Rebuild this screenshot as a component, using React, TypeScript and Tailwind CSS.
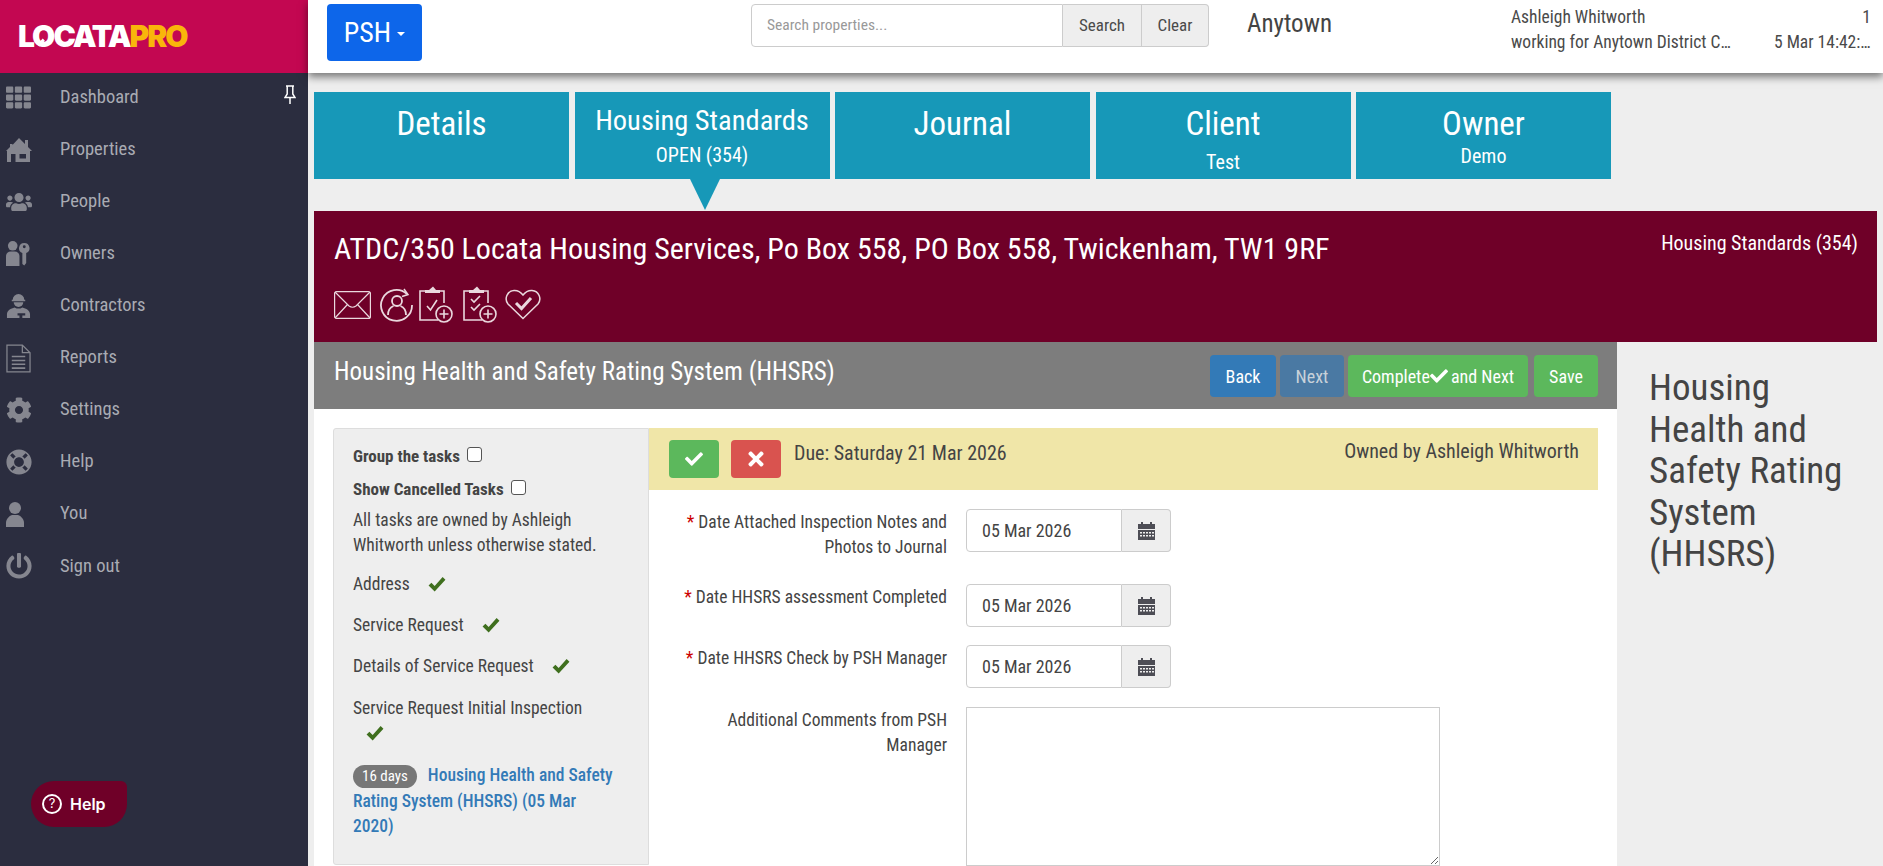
import { ReactNode } from "react";
import { FaCheck, FaCog, FaLifeRing, FaPowerOff, FaTh, FaTimes, FaUsers } from "react-icons/fa";

function HomeIcon() {
  return (
    <svg viewBox="0 0 26 26" className="w-[26px] h-[26px]" fill="currentColor">
      <path
        fillRule="evenodd"
        d="M13 1l6 6V3h3v7l4 4h-2v11H1V14H0l4-4V7h2.500v1zM13.500 17v4.500H20V17zM5 17v8h4.500v-8z"
      />
    </svg>
  );
}

function PersonIcon() {
  return (
    <svg viewBox="0 0 18 25" className="w-[18px] h-[25px]" fill="currentColor">
      <circle cx="9" cy="6" r="6" />
      <path d="M0 25v-4c0-4 3-7 6-8h6c3 1 6 4 6 8v4z" />
    </svg>
  );
}

function OwnerIcon() {
  return (
    <svg viewBox="0 0 26 26" className="w-[25px] h-[25px]" fill="currentColor">
      <circle cx="7" cy="5" r="5" />
      <path d="M0 26V16c0-3 2-5 5-5h4c3 0 5 2 5 5v10z" />
      <path fillRule="evenodd" d="M19 2a5.5 5.5 0 0 1 2 10.6V23l-2 2.5-2-1.500v-11.400A5.500 5.500 0 0 1 19 2zm0 2.500a1.500 1.500 0 1 0 0 3 1.500 1.500 0 0 0 0-3z" />
    </svg>
  );
}

function ContractorIcon() {
  return (
    <svg viewBox="0 0 26 26" className="w-[25px] h-[25px]" fill="currentColor">
      <path d="M7 7a6 6 0 0 1 12 0h1v1.500H6V7z" />
      <path d="M8 9.500h10a5 5 0 0 1-10 0z" />
      <path d="M1 26v-4c0-4 4-6 8-7l2 1h4l2-1c4 1 8 3 8 7v4H17v-2.500h3V21h-8v2.500h2V26z" />
    </svg>
  );
}

function ReportIcon() {
  return (
    <svg viewBox="0 0 26 30" className="w-[25px] h-[29px]" fill="none" stroke="currentColor" strokeWidth="1.300">
      <path d="M1 1h16l8 8v20H1z" />
      <path d="M17 1v8h8" />
      <path d="M6 13h14M6 17h14M6 21h14M6 25h14" strokeWidth="1.600" />
    </svg>
  );
}

function PinIcon() {
  return (
    <svg viewBox="0 0 12 20" className="w-[12px] h-[20px]" fill="none" stroke="white" strokeWidth="1.500">
      <path d="M2 1h8M3.200 1v8L1 12.500h10L8.800 9V1M6 12.500V19" />
    </svg>
  );
}

function CalendarIcon() {
  return (
    <svg viewBox="0 0 17 18" className="w-[17px] h-[18px]" fill="#4d4d55">
      <path d="M3 0h2v2h7V0h2v2h3v5H0V2h3z" />
      <path
        fillRule="evenodd"
        d="M0 8h17v10H0zm2 2v1.500h2V10zm3 0v1.500h2V10zm3 0v1.500h2V10zm3 0v1.500h2V10zm3 0v1.500h2V10zM2 13v1.500h2V13zm3 0v1.500h2V13zm3 0v1.500h2V13zm3 0v1.500h2V13zm3 0v1.500h2V13z"
      />
    </svg>
  );
}

function GreenTick() {
  return (
    <svg viewBox="0 0 18 16" className="w-[18px] h-[15px]" fill="#3f6f1e">
      <path d="M0 9l3-3 3.500 3.500L15 0l3 3L6.500 15.500z" />
    </svg>
  );
}

function ActionIcons() {
  return (
    <div className="flex items-center mt-[19px] text-[#ead8de]">
      <svg viewBox="0 0 37 28" className="w-[37px] h-[28px]" fill="none" stroke="currentColor" strokeWidth="1.200">
        <rect x="0.600" y="0.600" width="35.800" height="26.800" rx="2" />
        <path d="M1 1l14 14q3.500 2.500 7 0L36 1M1 27l12.500-13.500M36 27L23.500 13.500" />
      </svg>
      <svg viewBox="0 0 34 34" className="w-[34px] h-[34px] ml-[9px]" fill="none" stroke="currentColor" strokeWidth="1.800">
        <path d="M27 6a15.500 15.500 0 1 0 5 11" />
        <path d="M24 1l4 5.500-6 2" strokeWidth="1.500" />
        <circle cx="17" cy="13" r="5" />
        <path d="M8 27c0-5 3-8 5.500-9M26 27c0-5-3-8-5.500-9" />
      </svg>
      <svg viewBox="0 0 34 37" className="w-[34px] h-[37px] ml-[5px]" fill="none" stroke="currentColor" strokeWidth="1.600">
        <path d="M8 5H1v29h18M19 5h6v12" />
        <path d="M6 7h15V4h-4l-3-3.500L10 4H6z" fill="currentColor" stroke="none" />
        <path d="M8 20l3.500 4L18 14" />
        <circle cx="25" cy="28" r="8" />
        <path d="M20.500 28h9M25 23.500v9" />
      </svg>
      <svg viewBox="0 0 34 37" className="w-[34px] h-[37px] ml-[10px]" fill="none" stroke="currentColor" strokeWidth="1.600">
        <path d="M8 5H1v29h18M19 5h6v12" />
        <path d="M6 7h15V4h-4l-3-3.500L10 4H6z" fill="currentColor" stroke="none" />
        <path d="M8 13l3 3 6-6M8 21l3 3 6-6" />
        <circle cx="25" cy="28" r="8" />
        <path d="M20.500 28h9M25 23.500v9" />
      </svg>
      <svg viewBox="0 0 36 31" className="w-[36px] h-[31px] ml-[8px]" fill="none" stroke="currentColor" strokeWidth="1.500">
        <path d="M18 29.500L3 15C-1 10 2 2 9 1.500c4-.3 7 2 9 4.500 2-2.500 5-4.800 9-4.500 7 .5 10 8.500 6 13.500z" />
        <path d="M11 14l5.500 5.500L26 9" strokeWidth="3" />
      </svg>
    </div>
  );
}

const menu: { label: string; icon: ReactNode }[] = [
  { label: "Dashboard", icon: <FaTh size={25} /> },
  { label: "Properties", icon: <HomeIcon /> },
  { label: "People", icon: <FaUsers size={26} /> },
  { label: "Owners", icon: <OwnerIcon /> },
  { label: "Contractors", icon: <ContractorIcon /> },
  { label: "Reports", icon: <ReportIcon /> },
  { label: "Settings", icon: <FaCog size={26} /> },
  { label: "Help", icon: <FaLifeRing size={26} /> },
  { label: "You", icon: <PersonIcon /> },
  { label: "Sign out", icon: <FaPowerOff size={26} /> },
];

function Sidebar() {
  return (
    <aside className="w-[308px] shrink-0 bg-[#2b2d3f] relative">
      <div className="h-[73px] bg-[#c30751] flex items-center pl-[18px]">
        <span className="relative [font-family:Inter,sans-serif] [font-stretch:normal] font-black text-[30px] tracking-[-2px] text-white">
          LOCATA<span className="text-[#f9b50b]">PRO</span>
          <span className="absolute left-[19px] top-[27px] w-[8px] h-[3px] bg-white -rotate-45" />
        </span>
      </div>
      <div className="absolute left-[284px] top-[85px]">
        <PinIcon />
      </div>
      <nav className="-mt-[1.500px]">
        {menu.map((item) => (
          <div key={item.label} className="flex items-center h-[52.100px] text-[18.500px] text-[#a9abb3]">
            <div className="w-[60px] pl-[6px] text-[#85868f]">{item.icon}</div>
            <span>{item.label}</span>
          </div>
        ))}
      </nav>
      <div className="absolute left-[31px] top-[781px] w-[96px] h-[46px] bg-[#6f0028] rounded-[23px] rounded-tr-[6px] flex items-center pl-[11px] text-white [font-family:Inter,sans-serif] [font-stretch:normal] font-semibold text-[16px]">
        <span className="w-[20px] h-[20px] rounded-full border-2 border-white text-[13px] flex items-center justify-center mr-[8px] font-normal">
          ?
        </span>
        Help
      </div>
    </aside>
  );
}

function TopBar() {
  return (
    <header className="h-[73px] shrink-0 bg-white shadow-[0_4px_8px_rgba(0,0,0,0.5)] relative flex text-[#4a4a4a]">
      <button className="ml-[19px] mt-[4px] w-[95px] h-[57px] bg-[#0d66ea] rounded-[4px] text-white text-[28px] flex items-center justify-center">
        PSH
        <span className="ml-[6px] mt-[2px] border-x-[4px] border-x-transparent border-t-[4px] border-t-white" />
      </button>
      <div className="ml-[329px] mt-[4px] h-[43px] flex text-[17px]">
        <div className="w-[312px] border border-[#ccc] rounded-l-[4px] flex items-center pl-[15px] text-[15.500px] text-[#999]">
          Search properties...
        </div>
        <div className="w-[79px] border-y border-r border-[#ccc] bg-[#eee] flex items-center justify-center">Search</div>
        <div className="w-[67px] border-y border-r border-[#ccc] bg-[#eee] rounded-r-[4px] flex items-center justify-center">
          Clear
        </div>
      </div>
      <div className="ml-[38px] mt-[5px] text-[25px] text-[#444]">Anytown</div>
      <div className="ml-[179px] mt-[5px] w-[221px] text-[17.500px] leading-[25px]">
        <div>Ashleigh Whitworth</div>
        <div className="truncate">working for Anytown District Council</div>
      </div>
      <div className="ml-[42px] mt-[5px] w-[97px] text-[17.500px] leading-[25px] text-right">
        <div>1</div>
        <div className="truncate">5 Mar 14:42:00</div>
      </div>
    </header>
  );
}

const tabs = [
  { title: "Details", titleClass: "text-[33px] leading-[38px] pt-[13px]" },
  { title: "Housing Standards", sub: "OPEN (354)", titleClass: "text-[28.500px] leading-[34px] pt-[12px]", subClass: "mt-[5px] leading-[24px]" },
  { title: "Journal", titleClass: "text-[33px] leading-[38px] pt-[13px]" },
  { title: "Client", sub: "Test", titleClass: "text-[33px] leading-[38px] pt-[13px]", subClass: "mt-[7px] leading-[24px]" },
  { title: "Owner", sub: "Demo", titleClass: "text-[33px] leading-[38px] pt-[13px]", subClass: "mt-[1px] leading-[24px]" },
];

function Tabs() {
  return (
    <div className="flex shrink-0 gap-[5.500px] pl-[6px] pt-[19px]">
      {tabs.map((tab, i) => (
        <div key={tab.title} className="relative w-[255px] h-[87px] bg-[#1798b8] text-white text-center">
          <div className={tab.titleClass}>{tab.title}</div>
          {tab.sub && <div className={`text-[20px] ${tab.subClass}`}>{tab.sub}</div>}
          {i === 1 && (
            <span className="absolute left-[115px] top-[87px] border-x-[15.500px] border-x-transparent border-t-[31px] border-t-[#1798b8]" />
          )}
        </div>
      ))}
    </div>
  );
}

function DateField({ className }: { className?: string }) {
  return (
    <div className={`flex w-[205px] h-[43px] shrink-0 ${className ?? ""}`}>
      <div className="w-[156px] border border-[#ccc] rounded-l-[4px] flex items-center pl-[15px] text-[18px] text-[#444]">
        05 Mar 2026
      </div>
      <div className="flex-1 border-y border-r border-[#ccc] bg-[#eee] rounded-r-[4px] flex items-center justify-center">
        <CalendarIcon />
      </div>
    </div>
  );
}

function Req() {
  return <span className="text-[#c00] mr-[4px]">*</span>;
}

function TaskList() {
  const done = ["Address", "Service Request", "Details of Service Request"];
  return (
    <div className="w-[316px] h-[437px] shrink-0 ml-[19px] bg-[#eee] border border-[#ddd] rounded-l-[3px] pl-[19px] pr-[30px] pt-[15px] text-[17.500px] text-[#444]">
      <div className="font-bold text-[17px] leading-[25px] flex items-center">
        Group the tasks
        <span className="w-[15px] h-[15px] ml-[7px] mb-[4px] border border-[#555] rounded-[3px] bg-white" />
      </div>
      <div className="font-bold text-[17px] leading-[25px] mt-[8px] flex items-center">
        Show Cancelled Tasks
        <span className="w-[15px] h-[15px] ml-[7px] mb-[4px] border border-[#555] rounded-[3px] bg-white" />
      </div>
      <div className="leading-[25px] mt-[6px]">
        All tasks are owned by Ashleigh Whitworth unless otherwise stated.
      </div>
      {done.map((name, i) => (
        <div key={name} className={`flex items-center leading-[25px] ${i === 0 ? "mt-[14px]" : "mt-[16px]"}`}>
          {name}
          <span className="ml-[18px]">
            <GreenTick />
          </span>
        </div>
      ))}
      <div className="leading-[25px] mt-[17px]">Service Request Initial Inspection</div>
      <div className="pl-[13px] h-[25px] flex items-center">
        <GreenTick />
      </div>
      <div className="leading-[25.500px] mt-[17px] text-[#337ab7] font-medium">
        <span className="inline-block bg-[#777] text-white text-[15px] leading-[23px] h-[23px] rounded-full px-[9px] mr-[11px] font-normal">
          16 days
        </span>
        Housing Health and Safety Rating System (HHSRS) (05 Mar 2020)
      </div>
    </div>
  );
}

function TaskForm() {
  return (
    <div className="flex-1 mr-[19px] min-w-0 text-[#444]">
      <div className="h-[62px] bg-[#f0e6a8] flex text-[20px]">
        <button className="ml-[20px] mt-[12px] w-[50px] h-[38px] bg-[#5cb85c] rounded-[4px] text-white flex items-center justify-center">
          <FaCheck size={18} />
        </button>
        <button className="ml-[12px] mt-[12px] w-[50px] h-[38px] bg-[#d9534f] rounded-[4px] text-white flex items-center justify-center">
          <FaTimes size={22} />
        </button>
        <div className="ml-[13px] mt-[13px] leading-[25px]">Due: Saturday 21 Mar 2026</div>
        <div className="ml-auto mr-[19px] mt-[11px] leading-[25px]">Owned by Ashleigh Whitworth</div>
      </div>
      <div className="text-[17.500px] leading-[25px]">
        <div className="flex pt-[19px]">
          <div className="w-[298px] text-right pt-[1px]">
            <Req />
            Date Attached Inspection Notes and Photos to Journal
          </div>
          <DateField className="ml-[19px]" />
        </div>
        <div className="flex pt-[24px]">
          <div className="w-[298px] text-right pt-[1px]">
            <Req />
            Date HHSRS assessment Completed
          </div>
          <DateField className="ml-[19px]" />
        </div>
        <div className="flex pt-[18px]">
          <div className="w-[298px] text-right pt-[1px]">
            <Req />
            Date HHSRS Check by PSH Manager
          </div>
          <DateField className="ml-[19px]" />
        </div>
        <div className="flex pt-[19px]">
          <div className="w-[298px] text-right pt-[1px] pl-[30px]">Additional Comments from PSH Manager</div>
          <textarea className="ml-[19px] w-[474px] h-[159px] border border-[#ccc] bg-white" />
        </div>
      </div>
    </div>
  );
}

export default function App() {
  return (
    <div className="flex h-[866px] overflow-hidden bg-[#eee] [font-family:'Roboto_Condensed','Liberation_Sans_Narrow',Roboto,sans-serif] [font-stretch:75%]">
      <Sidebar />
      <main className="flex-1 min-w-0 flex flex-col">
        <TopBar />
        <Tabs />
        <div className="ml-[6px] mr-[6px] mt-[32px] h-[131px] shrink-0 bg-[#6f0028] text-white pl-[20px] pr-[19px] pt-[19px]">
          <div className="flex justify-between">
            <div className="text-[30px] leading-[36px] mt-[1px]">
              ATDC/350 Locata Housing Services, Po Box 558, PO Box 558, Twickenham, TW1 9RF
            </div>
            <div className="text-[20px] leading-[26px]">Housing Standards (354)</div>
          </div>
          <ActionIcons />
        </div>
        <div className="flex flex-1 ml-[6px] mr-[6px] min-h-0">
          <div className="w-[1303px] shrink-0 flex flex-col bg-white">
            <div className="h-[67px] shrink-0 bg-[#7d7d7d] text-white flex pl-[20px] pr-[19px]">
              <div className="text-[25px] leading-[30px] mt-[15px]">Housing Health and Safety Rating System (HHSRS)</div>
              <div className="ml-auto mt-[13px] flex h-[42px] text-[18px]">
                <button className="w-[66px] bg-[#337ab7] rounded-[4px]">Back</button>
                <button className="w-[64px] ml-[4px] bg-[#4a79a3] text-[#c8d2da] rounded-[4px]">Next</button>
                <button className="w-[180px] ml-[4px] bg-[#5cb85c] rounded-[4px] flex items-center justify-center">
                  Complete
                  <FaCheck size={18} />
                  <span className="ml-[3px]">and Next</span>
                </button>
                <button className="w-[64px] ml-[6px] bg-[#5cb85c] rounded-[4px]">Save</button>
              </div>
            </div>
            <div className="flex pt-[19px] min-h-0">
              <TaskList />
              <TaskForm />
            </div>
          </div>
          <div className="flex-1 pl-[32px] pr-[20px] pt-[25px] text-[37px] leading-[41.500px] text-[#444]">
            Housing Health and Safety Rating System (HHSRS)
          </div>
        </div>
      </main>
    </div>
  );
}
